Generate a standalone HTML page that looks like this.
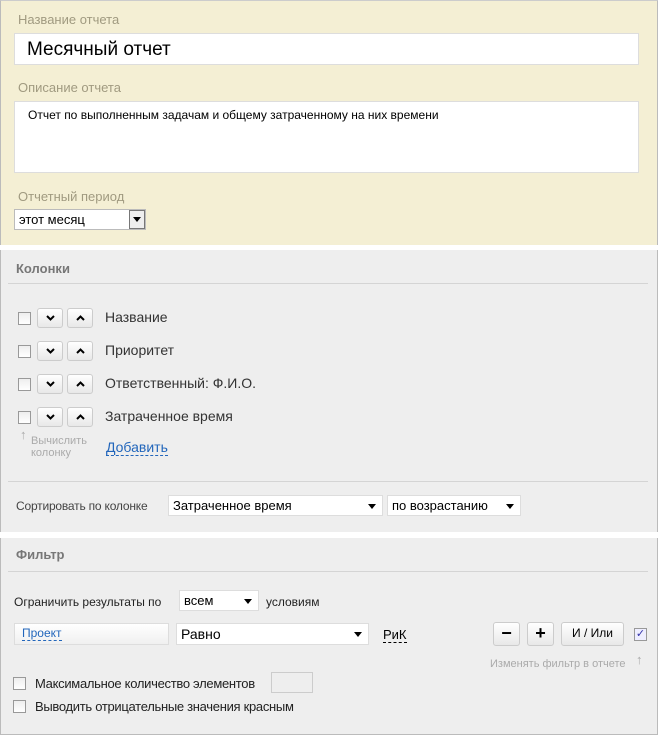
<!DOCTYPE html>
<html><head><meta charset="utf-8"><style>
*{box-sizing:border-box;margin:0;padding:0}
body{width:658px;height:735px;background:#fff;font-family:"Liberation Sans",sans-serif;position:relative;overflow:hidden;font-size:13px;color:#333}
.a{position:absolute}
.lbl{color:#a09a80;font-size:13px}
.inp{background:#fff;border:1px solid #ddd}
.cb{position:absolute;width:13px;height:13px;border:1px solid #999;background:linear-gradient(#eee,#fff)}
.btn{position:absolute;height:20px;border:1px solid #ccc;border-radius:3px;background:linear-gradient(#fff,#e8e8e8);text-align:center;font-size:12px;color:#000}
.btn svg{position:absolute;left:8px;top:6px}
.sel{position:absolute;background:#fff;border:1px solid #ddd;height:21px;font-size:14px;color:#000;padding:2px 4px}
.sel:after{content:"";position:absolute;right:6px;top:8px;border-left:4px solid transparent;border-right:4px solid transparent;border-top:5px solid #000}
.h{font-weight:bold;color:#777;font-size:13px}
.line{position:absolute;height:1px;background:#d4d4d4}
.gray{color:#aaa;font-size:11px}
.link{color:#2266bb;border-bottom:1px dashed #2266bb}
</style></head><body>
<div class="a" style="left:0;top:0;width:658px;height:245px;background:#f4efd4;border-left:1px solid #bbb;border-right:1px solid #bbb;border-top:1px solid #ccc"></div>
<div class="a" style="left:0;top:250px;width:658px;height:282px;background:#eeeeee;border-left:1px solid #bbb;border-right:1px solid #bbb"></div>
<div class="a" style="left:0;top:538px;width:658px;height:197px;background:#eeeeee;border-left:1px solid #bbb;border-right:1px solid #bbb;border-bottom:1px solid #bbb"></div>

<div class="a lbl" style="left:18px;top:12px">Название отчета</div>
<div class="a inp" style="left:14px;top:33px;width:625px;height:32px;font-size:19px;color:#000;padding:5px 12px">Месячный отчет</div>
<div class="a lbl" style="left:18px;top:80px">Описание отчета</div>
<div class="a inp" style="left:14px;top:101px;width:625px;height:72px;font-size:12px;color:#000;padding:6px 13px">Отчет по выполненным задачам и общему затраченному на них времени</div>
<div class="a lbl" style="left:18px;top:189px">Отчетный период</div>
<div class="a" style="left:14px;top:209px;width:132px;height:21px;background:#fff;border:1px solid #bbb;font-size:13px;color:#000;padding:2px 4px">этот месяц</div>
<div class="a" style="left:129px;top:210px;width:16px;height:19px;border:1px solid #777;background:#eee"></div>
<div class="a" style="left:133px;top:217px;border-left:4px solid transparent;border-right:4px solid transparent;border-top:5px solid #000"></div>

<div class="a h" style="left:16px;top:261px">Колонки</div>
<div class="line" style="left:8px;top:283px;width:640px"></div>

<div class="cb" style="left:18px;top:312px"></div><div class="btn" style="left:37px;top:308px;width:26px"><svg width="9" height="6"><path d="M1 1L4.5 4.5L8 1" stroke="#000" stroke-width="2" fill="none"/></svg></div><div class="btn" style="left:67px;top:308px;width:26px"><svg width="9" height="6"><path d="M1 5L4.5 1.5L8 5" stroke="#000" stroke-width="2" fill="none"/></svg></div><div class="a" style="left:105px;top:309px;font-size:14px">Название</div>
<div class="cb" style="left:18px;top:345px"></div><div class="btn" style="left:37px;top:341px;width:26px"><svg width="9" height="6"><path d="M1 1L4.5 4.5L8 1" stroke="#000" stroke-width="2" fill="none"/></svg></div><div class="btn" style="left:67px;top:341px;width:26px"><svg width="9" height="6"><path d="M1 5L4.5 1.5L8 5" stroke="#000" stroke-width="2" fill="none"/></svg></div><div class="a" style="left:105px;top:342px;font-size:14px">Приоритет</div>
<div class="cb" style="left:18px;top:378px"></div><div class="btn" style="left:37px;top:374px;width:26px"><svg width="9" height="6"><path d="M1 1L4.5 4.5L8 1" stroke="#000" stroke-width="2" fill="none"/></svg></div><div class="btn" style="left:67px;top:374px;width:26px"><svg width="9" height="6"><path d="M1 5L4.5 1.5L8 5" stroke="#000" stroke-width="2" fill="none"/></svg></div><div class="a" style="left:105px;top:375px;font-size:14px">Ответственный: Ф.И.О.</div>
<div class="cb" style="left:18px;top:411px"></div><div class="btn" style="left:37px;top:407px;width:26px"><svg width="9" height="6"><path d="M1 1L4.5 4.5L8 1" stroke="#000" stroke-width="2" fill="none"/></svg></div><div class="btn" style="left:67px;top:407px;width:26px"><svg width="9" height="6"><path d="M1 5L4.5 1.5L8 5" stroke="#000" stroke-width="2" fill="none"/></svg></div><div class="a" style="left:105px;top:408px;font-size:14px">Затраченное время</div>
<div class="a gray" style="left:20px;top:427px;font-size:13px">↑</div>
<div class="a gray" style="left:31px;top:435px;line-height:12px">Вычислить<br>колонку</div>
<div class="a link" style="left:106px;top:439px;font-size:14px;line-height:16px">Добавить</div>

<div class="line" style="left:8px;top:481px;width:640px"></div>
<div class="a" style="left:16px;top:499px;font-size:12px;color:#444;letter-spacing:-0.2px">Сортировать по колонке</div>
<div class="sel" style="left:168px;top:495px;width:215px;font-size:13px">Затраченное время</div>
<div class="sel" style="left:387px;top:495px;width:134px;font-size:13px">по возрастанию</div>

<div class="a h" style="left:16px;top:547px">Фильтр</div>
<div class="line" style="left:8px;top:571px;width:640px"></div>
<div class="a" style="left:14px;top:595px;font-size:12px;color:#222">Ограничить результаты по</div>
<div class="sel" style="left:179px;top:590px;width:80px;font-size:13px">всем</div>
<div class="a" style="left:266px;top:595px;font-size:12px;color:#222">условиям</div>

<div class="a" style="left:14px;top:623px;width:155px;height:22px;border:1px solid #ddd;background:linear-gradient(#fff,#f0f0f0);padding:2px 7px;font-size:12px"><span class="link">Проект</span></div>
<div class="sel" style="left:176px;top:623px;width:193px;height:22px">Равно</div>
<div class="a" style="left:383px;top:627px;font-size:13px;color:#000;border-bottom:1px dashed #000;line-height:15px">РиК</div>
<div class="btn" style="left:493px;top:622px;width:27px;height:24px;font-size:18px;line-height:20px;font-weight:bold">−</div>
<div class="btn" style="left:527px;top:622px;width:27px;height:24px;font-size:18px;line-height:20px;font-weight:bold">+</div>
<div class="btn" style="left:561px;top:622px;width:63px;height:24px;line-height:21px">И / Или</div>
<div class="cb" style="left:634px;top:628px;background:#eef;font-size:11px;line-height:10px;text-align:center;color:#33a">✓</div>
<div class="a gray" style="left:490px;top:658px">Изменять фильтр в отчете</div>
<div class="a gray" style="left:636px;top:652px;font-size:13px">↑</div>

<div class="cb" style="left:13px;top:677px"></div>
<div class="a" style="left:35px;top:676px;font-size:13px;color:#222;letter-spacing:-0.3px">Максимальное количество элементов</div>
<div class="a" style="left:271px;top:672px;width:42px;height:21px;border:1px solid #ccc;background:#eee"></div>
<div class="cb" style="left:13px;top:700px"></div>
<div class="a" style="left:35px;top:699px;font-size:13px;color:#222;letter-spacing:-0.3px">Выводить отрицательные значения красным</div>
</body></html>
